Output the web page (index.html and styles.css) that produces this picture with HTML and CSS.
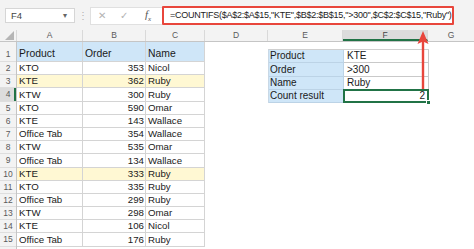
FILE: index.html
```html
<!DOCTYPE html>
<html lang="en">
<head>
    <meta charset="UTF-8">
    <meta name="viewport" content="width=device-width, initial-scale=1.0">
    <title>COUNTIFS example</title>
    <link rel="stylesheet" href="styles.css">
</head>
<body>
    <div class="formula-bar">
        <div class="name-box">
            <span>F4</span>
            <span class="caret">&#9662;</span>
        </div>
        <div class="grip">&#8942;</div>
        <div class="fx-buttons">
            <span class="btn-x">&#10005;</span>
            <span class="btn-ok">&#10003;</span>
            <span class="btn-fx"><i>f</i><sub>x</sub></span>
        </div>
        <div class="formula">=COUNTIFS($A$2:$A$15,"KTE",$B$2:$B$15,"&gt;300",$C$2:$C$15,"Ruby")</div>
    </div>

    <div class="sheet">
        <div class="col-heads">
            <div class="corner">
                <svg width="9" height="9" viewBox="0 0 9 9"><polygon points="9,0 9,9 0,9" fill="#b5b5b5"/></svg>
            </div>
            <div class="col-head w-a">A</div>
            <div class="col-head w-b">B</div>
            <div class="col-head w-c">C</div>
            <div class="col-head w-d">D</div>
            <div class="col-head w-e">E</div>
            <div class="col-head w-f active">F</div>
            <div class="col-head w-g">G</div>
        </div>

        <div class="sheet-body">
            <div class="row-heads">
                <div class="row-head first">1</div>
                <div class="row-head">2</div>
                <div class="row-head">3</div>
                <div class="row-head active">4</div>
                <div class="row-head">5</div>
                <div class="row-head">6</div>
                <div class="row-head">7</div>
                <div class="row-head">8</div>
                <div class="row-head">9</div>
                <div class="row-head">10</div>
                <div class="row-head">11</div>
                <div class="row-head">12</div>
                <div class="row-head">13</div>
                <div class="row-head">14</div>
                <div class="row-head">15</div>
                <div class="row-head"></div>
            </div>

            <div class="data-table">
                <div class="cell head">Product</div><div class="cell head">Order</div><div class="cell head">Name</div>
                <div class="cell">KTO</div><div class="cell num">353</div><div class="cell">Nicol</div>
                <div class="cell hl">KTE</div><div class="cell num hl">362</div><div class="cell hl">Ruby</div>
                <div class="cell">KTW</div><div class="cell num">300</div><div class="cell">Ruby</div>
                <div class="cell">KTO</div><div class="cell num">590</div><div class="cell">Omar</div>
                <div class="cell">KTE</div><div class="cell num">143</div><div class="cell">Wallace</div>
                <div class="cell">Office Tab</div><div class="cell num">354</div><div class="cell">Wallace</div>
                <div class="cell">KTW</div><div class="cell num">535</div><div class="cell">Omar</div>
                <div class="cell">Office Tab</div><div class="cell num">134</div><div class="cell">Wallace</div>
                <div class="cell hl">KTE</div><div class="cell num hl">333</div><div class="cell hl">Ruby</div>
                <div class="cell">KTO</div><div class="cell num">335</div><div class="cell">Ruby</div>
                <div class="cell">Office Tab</div><div class="cell num">299</div><div class="cell">Ruby</div>
                <div class="cell">KTW</div><div class="cell num">298</div><div class="cell">Omar</div>
                <div class="cell">KTE</div><div class="cell num">106</div><div class="cell">Nicol</div>
                <div class="cell">Office Tab</div><div class="cell num">176</div><div class="cell">Ruby</div>
            </div>

            <div class="criteria">
                <div class="c-cell label">Product</div><div class="c-cell">KTE</div>
                <div class="c-cell label">Order</div><div class="c-cell">&gt;300</div>
                <div class="c-cell label">Name</div><div class="c-cell">Ruby</div>
                <div class="c-cell label">Count result</div><div class="c-cell result">2<span class="handle"></span></div>
            </div>
        </div>
    </div>

    <svg class="arrow" width="14" height="60" viewBox="0 0 14 60">
        <line x1="7" y1="10" x2="7" y2="58" stroke="#e8463c" stroke-width="2.4"/>
        <polygon points="7,0 12.5,13 7,10.5 1.5,13" fill="#e8463c"/>
    </svg>
</body>
</html>
```

FILE: styles.css
```css
:root {
    --grid-line: #d4d4d4;
    --head-bg: #f3f3f3;
    --head-text: #5a5a5a;
    --excel-green: #217346;
    --blue-fill: #cfe6f8;
    --yellow-fill: #fff8d3;
    --red: #e8463c;
}

* {
    margin: 0;
    padding: 0;
    box-sizing: border-box;
}

body {
    width: 474px;
    height: 249px;
    overflow: hidden;
    position: relative;
    background: #fff;
    font-family: 'Liberation Sans', Arial, sans-serif;
    color: #1a1a1a;
}

/* Formula bar */
.formula-bar {
    height: 30px;
    background: var(--head-bg);
    display: flex;
    align-items: center;
    padding: 1px 0 0 5px;
}

.name-box {
    width: 70px;
    height: 15px;
    background: #fff;
    border: 1px solid #d6d6d6;
    display: flex;
    align-items: center;
    justify-content: space-between;
    padding: 0 7px 0 5px;
    font-size: 9.5px;
    color: #444;
}

.caret {
    font-size: 8px;
    color: #666;
}

.grip {
    width: 15px;
    text-align: center;
    color: #b0b0b0;
    font-size: 10px;
}

.fx-buttons {
    width: 72px;
    height: 18px;
    background: #fff;
    border: 1px solid #e0e0e0;
    border-right: none;
    display: flex;
    align-items: center;
    padding-left: 7px;
    gap: 14px;
    color: #b3b3b3;
    font-size: 10px;
}

.btn-fx {
    color: #555;
    font-family: 'Liberation Serif', serif;
    font-size: 11px;
    margin-left: 3px;
}

.btn-fx sub {
    font-size: 7px;
    font-style: italic;
}

.formula {
    width: 292px;
    height: 19px;
    background: #fff;
    border: 2px solid var(--red);
    border-radius: 1px;
    padding: 0 0 0 6px;
    font-size: 9px;
    letter-spacing: -0.25px;
    line-height: 15px;
    color: #222;
    white-space: nowrap;
    overflow: hidden;
}

/* Column headers */
.col-heads {
    display: flex;
    height: 12px;
    background: var(--head-bg);
    border-bottom: 1px solid #c5c5c5;
}

.corner {
    width: 17px;
    display: flex;
    align-items: flex-end;
    justify-content: flex-end;
    padding: 0 2px 1px 0;
    border-right: 1px solid #d9d9d9;
}

.col-head {
    font-size: 8.5px;
    line-height: 11px;
    text-align: center;
    color: var(--head-text);
    border-right: 1px solid #d9d9d9;
}

.col-head.active {
    background: #dcdcdc;
    border-bottom: 2px solid var(--excel-green);
    color: #444;
}

.w-a { width: 66px; }
.w-b { width: 63px; }
.w-c { width: 59px; }
.w-d { width: 63px; }
.w-e { width: 75px; }
.w-f { width: 85px; }
.w-g { width: 46px; border-right: none; }

/* Sheet body */
.sheet-body {
    display: flex;
    align-items: flex-start;
}

.row-heads {
    width: 17px;
    background: var(--head-bg);
    border-right: 1px solid #c5c5c5;
}

.row-head {
    height: 13.2px;
    font-size: 8.5px;
    line-height: 13px;
    text-align: center;
    color: var(--head-text);
    border-bottom: 1px solid #dedede;
}

.row-head.first {
    height: 20px;
    line-height: 24px;
}

.row-head.active {
    background: #dcdcdc;
    box-shadow: inset -2px 0 0 var(--excel-green);
}

.data-table {
    display: grid;
    grid-template-columns: 66px 63px 59px;
    grid-template-rows: 20px;
    grid-auto-rows: 13.2px;
}

.cell {
    border-right: 1px solid var(--grid-line);
    border-bottom: 1px solid var(--grid-line);
    font-size: 9.7px;
    line-height: 11px;
    padding: 0 2px 1px 2px;
    display: flex;
    align-items: flex-end;
    white-space: nowrap;
    overflow: hidden;
}

.cell.head {
    background: var(--blue-fill);
    font-size: 10.4px;
    padding-bottom: 2px;
}

.cell.num {
    justify-content: flex-end;
    padding-right: 1px;
}

.cell.hl {
    background: var(--yellow-fill);
}

/* Criteria table */
.criteria {
    display: grid;
    grid-template-columns: 75px 85px;
    grid-auto-rows: 13.25px;
    margin: 7px 0 0 63px;
    border-top: 1px solid #cfcfcf;
    border-left: 1px solid #c8d8e6;
}

.c-cell {
    border-right: 1px solid #c9c9c9;
    border-bottom: 1px solid #c9c9c9;
    font-size: 10px;
    line-height: 11px;
    padding: 0 2px 1px 3px;
    display: flex;
    align-items: flex-end;
    white-space: nowrap;
    position: relative;
}

.c-cell.label {
    background: var(--blue-fill);
    border-right-color: #bcd3e6;
    border-bottom-color: #bcd3e6;
    padding-left: 1px;
}

.c-cell.result {
    justify-content: flex-end;
    border: 2px solid var(--excel-green);
    margin: -1px 0 0 -1px;
    padding: 0 2px 0 0;
}

.handle {
    position: absolute;
    right: -4px;
    bottom: -4px;
    width: 5px;
    height: 5px;
    background: var(--excel-green);
    border: 1px solid #fff;
}

/* Callout arrow pointing at the formula */
.arrow {
    position: absolute;
    left: 416px;
    top: 31px;
}
```
